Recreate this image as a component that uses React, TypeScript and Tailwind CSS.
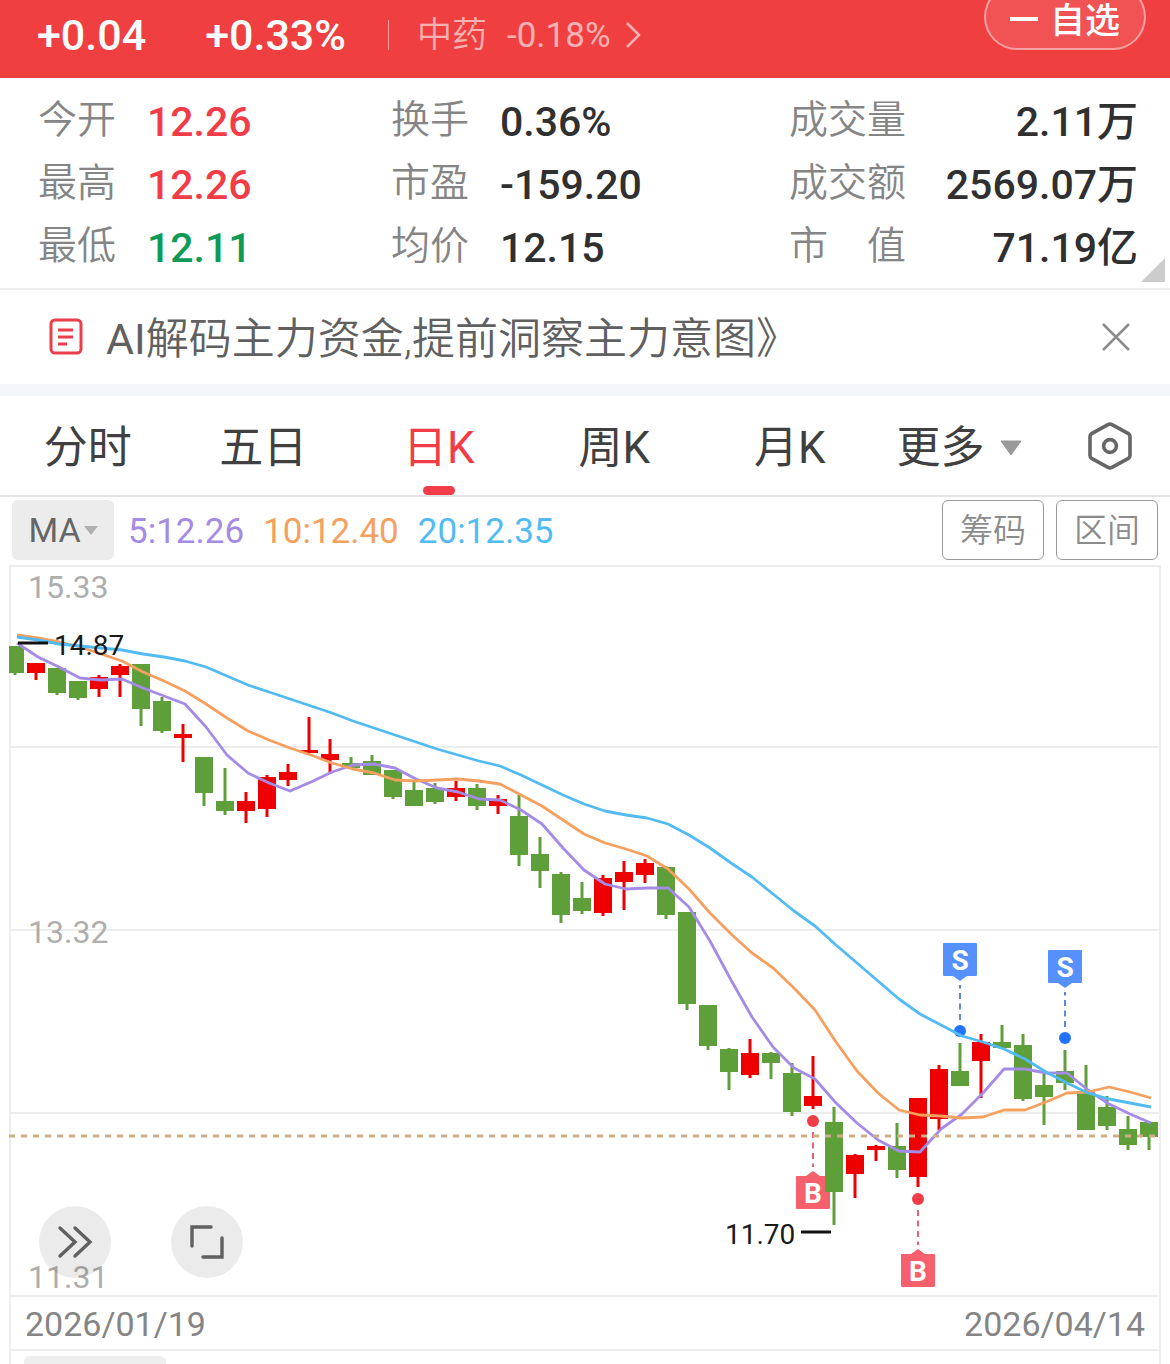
import { ReactNode, useState } from "react";

type Candle = [high: number, top: number, bottom: number, low: number, up: 0 | 1];

const STEP = 21;
const FIRST_X = 15;

const candles: Candle[] = [
	[646, 646, 673, 675, 0],
	[663, 663, 673, 680, 1],
	[668, 668, 693, 695, 0],
	[681, 681, 698, 700, 0],
	[675, 677, 689, 697, 1],
	[664, 666, 675, 697, 1],
	[664, 664, 709, 726, 0],
	[697, 701, 731, 733, 0],
	[724, 734, 738, 762, 1],
	[757, 757, 793, 806, 0],
	[768, 801, 811, 815, 0],
	[792, 801, 811, 823, 1],
	[775, 777, 809, 817, 1],
	[764, 772, 780, 786, 1],
	[717, 750, 753, 753, 1],
	[739, 754, 760, 772, 1],
	[757, 763, 768, 768, 0],
	[755, 761, 775, 775, 0],
	[770, 770, 797, 799, 0],
	[781, 790, 806, 806, 0],
	[783, 788, 802, 804, 0],
	[781, 788, 797, 801, 1],
	[784, 788, 806, 810, 0],
	[795, 799, 806, 814, 1],
	[795, 816, 855, 866, 0],
	[837, 854, 871, 888, 0],
	[872, 874, 915, 923, 0],
	[882, 898, 911, 914, 0],
	[875, 878, 913, 916, 1],
	[861, 872, 882, 910, 1],
	[859, 863, 875, 883, 1],
	[866, 867, 915, 919, 0],
	[912, 912, 1004, 1010, 0],
	[1005, 1005, 1046, 1050, 0],
	[1048, 1049, 1072, 1090, 0],
	[1039, 1053, 1075, 1078, 1],
	[1052, 1053, 1063, 1079, 0],
	[1063, 1073, 1112, 1116, 0],
	[1056, 1096, 1106, 1109, 1],
	[1107, 1122, 1192, 1225, 0],
	[1154, 1155, 1174, 1198, 1],
	[1145, 1146, 1150, 1161, 1],
	[1123, 1146, 1170, 1178, 0],
	[1098, 1098, 1177, 1187, 1],
	[1065, 1069, 1119, 1130, 1],
	[1043, 1071, 1086, 1086, 0],
	[1034, 1042, 1061, 1098, 1],
	[1025, 1042, 1048, 1048, 0],
	[1034, 1045, 1099, 1101, 0],
	[1074, 1085, 1097, 1125, 0],
	[1050, 1071, 1083, 1090, 0],
	[1065, 1092, 1130, 1130, 0],
	[1096, 1107, 1126, 1130, 0],
	[1116, 1129, 1145, 1150, 0],
	[1121, 1122, 1137, 1150, 0],
];

const averages = [
	{
		label: "5:12.26",
		text: "text-[#a48be6]",
		stroke: "#a48be6",
		ys: [
			643, 657, 667, 678, 680, 679, 688, 696, 704, 727, 755, 773, 783, 791, 782, 772, 765, 764, 768, 779, 788, 792,
			799, 800, 810, 824, 848, 870, 884, 889, 888, 888, 907, 941, 980, 1017, 1047, 1068, 1079, 1103, 1123, 1140,
			1151, 1152, 1129, 1114, 1093, 1069, 1069, 1073, 1073, 1090, 1104, 1114, 1123,
		],
	},
	{
		label: "10:12.40",
		text: "text-[#f5a05f]",
		stroke: "#f5a05f",
		ys: [
			635, 638, 642, 647, 654, 661, 672, 681, 691, 704, 718, 731, 740, 748, 755, 763, 769, 773, 780, 781, 780, 779,
			781, 784, 795, 806, 820, 834, 843, 849, 856, 869, 889, 913, 934, 953, 968, 988, 1010, 1042, 1071, 1093, 1110,
			1115, 1116, 1118, 1117, 1110, 1110, 1102, 1093, 1092, 1087, 1092, 1098,
		],
	},
	{
		label: "20:12.35",
		text: "text-[#53bbf3]",
		stroke: "#53bbf3",
		ys: [
			637, 640, 644, 646, 648, 650, 654, 657, 661, 667, 676, 685, 692, 699, 706, 713, 721, 728, 735, 742, 749, 755,
			761, 766, 775, 785, 795, 804, 811, 815, 818, 824, 835, 848, 863, 877, 894, 911, 926, 945, 963, 981, 999, 1014,
			1025, 1036, 1042, 1049, 1059, 1072, 1083, 1093, 1099, 1103, 1107,
		],
	},
];

// y is the dot that the flag hangs from
const trades = [
	{ side: "B", x: 813, y: 1121 },
	{ side: "B", x: 918, y: 1199 },
	{ side: "S", x: 960, y: 1031 },
	{ side: "S", x: 1065, y: 1038 },
];

const stats = [
	{ label: "今开", value: "12.26", color: "text-[#f23c48]" },
	{ label: "换手", value: "0.36%", color: "text-[#303030]" },
	{ label: "成交量", value: "2.11万", color: "text-[#303030]" },
	{ label: "最高", value: "12.26", color: "text-[#f23c48]" },
	{ label: "市盈", value: "-159.20", color: "text-[#303030]" },
	{ label: "成交额", value: "2569.07万", color: "text-[#303030]" },
	{ label: "最低", value: "12.11", color: "text-[#0f9a55]" },
	{ label: "均价", value: "12.15", color: "text-[#303030]" },
	{ label: "市值", value: "71.19亿", color: "text-[#303030]" },
];

const tabs = ["分时", "五日", "日K", "周K", "月K"];

function QuoteHeader() {
	return (
		<header className="flex h-[78px] items-center bg-[#f03f41] pr-6 pb-2 pl-[37px] text-white">
			<span className="text-[43px] leading-none font-medium">+0.04</span>
			<span className="ml-[59px] text-[43px] leading-none font-medium">+0.33%</span>
			<span className="ml-[42px] h-[30px] w-px bg-white/50" />
			<a href="#sector" className="ml-7 flex items-center text-[35px] leading-none text-white/60">
				<span className="font-[350]">中药</span>
				<span className="ml-5">-0.18%</span>
				<svg className="ml-[14px] h-7 w-4" viewBox="0 0 16 28" fill="none" stroke="currentColor" strokeWidth="2.5">
					<path d="M2 2L14 14L2 26" />
				</svg>
			</a>
			<button className="-mt-4 ml-auto flex h-[66px] w-[162px] items-center justify-center gap-3 self-start rounded-[33px] border-2 border-white/45 bg-white/10 pt-2 text-[35px] leading-none font-medium">
				<span className="mb-1 h-1 w-7 bg-white" />
				自选
			</button>
		</header>
	);
}

function StatGrid() {
	return (
		<section className="relative border-b-2 border-[#eeeeee] pt-3 pr-8 pb-[9px] pl-[38px]">
			<dl className="grid grid-cols-[353fr_398fr_349fr]">
				{stats.map((s, i) => (
					<div key={s.label} className="flex h-[63px] items-center">
						{i % 3 === 2 ? (
							<dt className="flex w-[117px] justify-between pb-[2px] text-[39px] leading-none font-[350] text-[#858585]">
								{[...s.label].map((c) => (
									<span key={c}>{c}</span>
								))}
							</dt>
						) : (
							<dt className="w-[109px] pb-[2px] text-[39px] leading-none font-[350] text-[#858585]">{s.label}</dt>
						)}
						<dd className={`pt-px text-[41px] leading-none font-medium ${s.color} ${i % 3 === 2 ? "ml-auto" : ""}`}>
							{s.value}
						</dd>
					</div>
				))}
			</dl>
			<svg className="absolute right-[5px] bottom-[6px] size-6" viewBox="0 0 24 24">
				<path d="M24 0V24H0Z" fill="#cccccc" />
			</svg>
		</section>
	);
}

function NoticeBar({ onClose }: { onClose: () => void }) {
	return (
		<section className="flex h-[94px] items-center pr-10 pl-[49px]">
			<svg className="h-[38px] w-[34px]" viewBox="0 0 34 38" fill="none" stroke="#ea3f4b" strokeWidth="3">
				<rect x="2" y="2" width="30" height="33" rx="4" />
				<path d="M9 12H24M9 19H24M9 26H18" />
			</svg>
			<a href="#notice" className="ml-[23px] pt-1 text-[43px] leading-none font-[350] text-[#606060]">
				<span className="font-normal">AI</span>解码主力资金,提前洞察主力意图》
			</a>
			<button aria-label="关闭" onClick={onClose} className="ml-auto">
				<svg className="size-7" viewBox="0 0 28 28" fill="none" stroke="#8c8c8c" strokeWidth="2.5">
					<path d="M1 1L27 27M27 1L1 27" />
				</svg>
			</button>
		</section>
	);
}

function PeriodTabs() {
	const [active, setActive] = useState("日K");

	return (
		<nav className="flex h-[101px] border-b-2 border-[#e4e4e4] text-[44px] leading-none text-[#404040]">
			{tabs.map((t) => (
				<button
					key={t}
					onClick={() => setActive(t)}
					className={`flex w-[15%] flex-col items-center justify-end ${t === active ? "text-[#f23c48]" : ""}`}
				>
					<span className="mb-4">{t}</span>
					<span className={`h-[9px] w-8 rounded-full ${t === active ? "bg-[#f23c48]" : ""}`} />
				</button>
			))}
			<button className="flex w-[14%] items-center justify-center gap-4 pt-1">
				更多
				<svg className="h-4 w-[22px]" viewBox="0 0 22 16">
					<path d="M1 1H21L11 15Z" fill="#999999" stroke="#999999" strokeLinejoin="round" />
				</svg>
			</button>
			<button aria-label="设置" className="flex flex-1 items-center justify-center pl-2">
				<svg className="h-12 w-11" viewBox="0 0 44 48" fill="none" stroke="#666666" strokeWidth="3.6" strokeLinejoin="round">
					<path d="M20 2.6Q22 1.6 24 2.6L40.4 11.6Q42 12.6 42 14.6V33.4Q42 35.4 40.4 36.4L24 45.4Q22 46.4 20 45.4L3.6 36.4Q2 35.4 2 33.4V14.6Q2 12.6 3.6 11.6Z" />
					<circle cx="22" cy="24" r="6.4" />
				</svg>
			</button>
		</nav>
	);
}

function IndicatorBar() {
	return (
		<div className="flex h-[68px] items-start pt-[3px] pr-3 pl-3">
			<button className="flex h-[60px] w-[102px] items-center justify-center gap-[3px] rounded-md bg-[#ececec] text-[34px] leading-none text-[#666666]">
				MA
				<svg className="h-[9px] w-[14px]" viewBox="0 0 14 9">
					<path d="M0 0H14L7 9Z" fill="#b0b0b0" />
				</svg>
			</button>
			<div className="ml-[14px] flex h-[60px] items-center gap-[19px] pt-[2px] text-[35px] leading-none">
				{averages.map((a) => (
					<span key={a.label} className={a.text}>
						{a.label}
					</span>
				))}
			</div>
			<div className="ml-auto flex gap-3 text-[33px] leading-none font-[350] text-[#8c8c8c]">
				<button className="h-[60px] w-[102px] rounded-md border border-[#999999]">筹码</button>
				<button className="h-[60px] w-[102px] rounded-md border border-[#999999]">区间</button>
			</div>
		</div>
	);
}

function TradeFlag({ side, x, y }: { side: string; x: number; y: number }) {
	const buy = side === "B";
	const dir = buy ? 1 : -1;
	const tip = y + dir * 50;
	const base = tip + dir * 5;
	const boxY = buy ? base : base - 33;
	const fill = buy ? "#f5606c" : "#5590fd";

	return (
		<g>
			<path
				d={`M${x} ${y + dir * 11}V${y + dir * 46}`}
				stroke={buy ? "#e06672" : "#5a8ad6"}
				strokeWidth="2"
				strokeDasharray="6 4.5"
			/>
			<circle cx={x} cy={y} r="6" fill={buy ? "#f23c48" : "#2173fb"} />
			<rect x={x - 17} y={boxY} width="34" height="33" rx="1" fill={fill} />
			<path d={`M${x - 7} ${base}L${x} ${tip}L${x + 7} ${base}Z`} fill={fill} />
			<text x={x} y={boxY + 27} textAnchor="middle" fontSize="28" fontWeight="700" fill="#ffffff">
				{side}
			</text>
		</g>
	);
}

function CandleChart() {
	return (
		<svg className="block w-full" viewBox="9 565 1152 730">
			<g stroke="#ededed" strokeWidth="2">
				<path d="M9 566H1161M10 747H1160M10 930H1160M10 1113H1160" />
				<path d="M10 566V1296M1160 566V1296" />
			</g>
			<g fontSize="32" fill="#aeaeae">
				<text x="28" y="598">15.33</text>
				<text x="28" y="943">13.32</text>
				<text x="28" y="1288">11.31</text>
			</g>
			{trades.map((t) => (
				<TradeFlag key={t.x} {...t} />
			))}
			{candles.map(([high, top, bottom, low, up], i) => {
				const x = FIRST_X + i * STEP;
				return (
					<g key={i} fill={up ? "#ee0000" : "#5f9f3a"}>
						<rect x={x - 9} y={top} width="18" height={bottom - top} />
						<rect x={x - 1.5} y={high} width="3" height={low - high} />
					</g>
				);
			})}
			{averages.map((a) => (
				<polyline
					key={a.label}
					points={a.ys.map((y, i) => `${FIRST_X + 2 + i * STEP},${y}`).join(" ")}
					fill="none"
					stroke={a.stroke}
					strokeWidth="2.8"
					strokeLinejoin="round"
				/>
			))}
			<path d="M9 1136H1160" stroke="#d0ad86" strokeWidth="3" strokeDasharray="6 6" />
			<path d="M18 643H48M801 1232H831" stroke="#111111" strokeWidth="3" />
			<g fontSize="28" fill="#1a1a1a">
				<text x="54" y="655">14.87</text>
				<text x="725" y="1244">11.70</text>
			</g>
		</svg>
	);
}

function RoundButton({ label, children }: { label: string; children: ReactNode }) {
	return (
		<button aria-label={label} className="flex size-[72px] items-center justify-center rounded-full bg-black/8">
			<svg className="size-9" viewBox="0 0 36 36" fill="none" stroke="#606060" strokeWidth="3.4" strokeLinecap="round">
				{children}
			</svg>
		</button>
	);
}

export default function App() {
	const [notice, setNotice] = useState(true);

	return (
		<main className="bg-white font-['Roboto','Noto_Sans_CJK_SC',sans-serif]">
			<QuoteHeader />
			<StatGrid />
			{notice && <NoticeBar onClose={() => setNotice(false)} />}
			<div className="h-3 bg-[#f3f5f8]" />
			<PeriodTabs />
			<IndicatorBar />
			<section className="mx-[9px]">
				<div className="relative">
					<CandleChart />
					<div className="absolute bottom-[17px] left-[30px] flex gap-[60px]">
						<RoundButton label="展开">
							<path d="M3 4L18 18L3 32M18 4L33 18L18 32" />
						</RoundButton>
						<RoundButton label="全屏">
							<path d="M3 22V3H22M33 14V33H14" />
						</RoundButton>
					</div>
				</div>
				<div className="border-x-2 border-[#ededed]">
					<div className="flex h-14 items-center justify-between border-y-2 border-[#ededed] px-[14px] pt-[2px] text-[34px] leading-none text-[#858585]">
						<time>2026/01/19</time>
						<time>2026/04/14</time>
					</div>
					<div className="h-[13px] pt-[5px] pl-[13px]">
						<div className="h-2 w-[142px] rounded-t-md bg-[#eeeeee]" />
					</div>
				</div>
			</section>
		</main>
	);
}
